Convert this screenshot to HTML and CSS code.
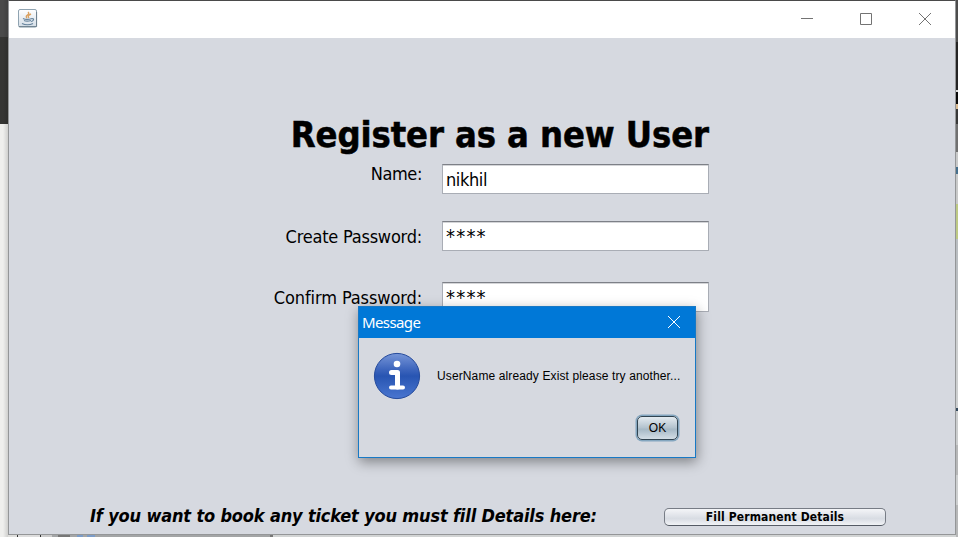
FILE: index.html
```
<!DOCTYPE html>
<html lang="en">
<head>
<meta charset="utf-8">
<title>Register</title>
<link rel="stylesheet" href="styles.css">
</head>
<body>
<div class="desktop">
  <div class="behind-left"></div>
  <main class="window">
    <header class="titlebar">
      <svg class="java" width="20" height="20" viewBox="0 0 20 20">
        <defs><linearGradient id="tile" x1="0" y1="0" x2="0" y2="1"><stop offset="0" stop-color="#fff"/><stop offset="1" stop-color="#d3dde6"/></linearGradient></defs>
        <rect x=".5" y=".5" width="18" height="17.500" rx="1.5" fill="url(#tile)" stroke="#8fa3b1"/>
        <path d="M1 17.600h17.600V3" fill="none" stroke="#6d7f8d"/>
        <path d="M9 9c-3-3 4-3 1-6M11 9c-2-2 0-3 2-4" fill="none" stroke="#dba160" stroke-width="1.4"/>
        <path d="M5 9.500c2 1 6 1 9 0M6 11.500c2 1 4 1 7 0M14 9.500c3 0 1 3-1 3M4 14.500c3 1.500 8 1.500 11 0" fill="none" stroke="#66839c" stroke-width="1.2"/>
      </svg>
      <div class="controls">
        <svg width="14" height="14" viewBox="0 0 14 14"><path d="M1 6.500h12"/></svg>
        <svg width="14" height="14" viewBox="0 0 14 14"><path d="M1.500 1.500h11v11h-11z"/></svg>
        <svg width="14" height="14" viewBox="0 0 14 14"><path d="M1 1l12 12M13 1L1 13"/></svg>
      </div>
    </header>
    <section class="content">
      <h1>Register as a new User</h1>
      <div class="form">
        <label class="l-name">Name:</label><div class="field name">nikhil</div>
        <label class="l-create">Create Password:</label><div class="field password">****</div>
        <label class="l-confirm">Confirm Password:</label><div class="field password">****</div>
      </div>
      <footer>
        <p>If you want to book any ticket you must fill Details here:</p>
        <button class="fill">Fill Permanent Details</button>
      </footer>
    </section>
  </main>
  <div class="behind-right">
    <i class="r1"></i><i class="r2"></i><i class="r3"></i><i class="r4"></i><i class="r5"></i><i class="r6"></i><i class="r7"></i><i class="r8"></i><i class="r9"></i><i class="r10"></i><i class="r11"></i><i class="r12"></i><i class="r13"></i><i class="r14"></i>
  </div>
  <div class="dialog">
    <div class="dialog-title"><span>Message</span>
      <svg width="14" height="14" viewBox="0 0 14 14"><path d="M1 1l12 12M13 1L1 13"/></svg>
    </div>
    <div class="dialog-body">
      <svg width="48" height="48" viewBox="0 0 48 48">
        <defs><linearGradient id="ball" x1="0" y1="0" x2="0" y2="1"><stop offset="0" stop-color="#7796d8"/><stop offset=".35" stop-color="#3e66bd"/><stop offset=".5" stop-color="#2855b2"/><stop offset="1" stop-color="#4a76d0"/></linearGradient></defs>
        <circle cx="24" cy="24" r="22.600" fill="url(#ball)" stroke="#264b9c"/>
        <circle cx="24" cy="12" r="3.300" fill="#fff"/>
        <path d="M18.500 20.500H24.500V35" fill="none" stroke="#fff" stroke-width="5" stroke-linecap="round" stroke-linejoin="round"/>
        <path d="M18 35.500h12" fill="none" stroke="#fff" stroke-width="4" stroke-linecap="round"/>
      </svg>
      <span class="msg">UserName already Exist please try another...</span>
    </div>
    <button class="ok">OK</button>
  </div>
</div>
</body>
</html>
```
FILE: styles.css
```
* { box-sizing: border-box; }
body { margin: 0; overflow: hidden; }
.desktop { position: relative; display: grid; grid-template-columns: 8px 948px 2px; width: 958px; height: 537px; background: linear-gradient(#4a4a4a 1px, transparent 1px), linear-gradient(90deg, #dededc 17px, #333 17px 18px, #ddd 18px 40px, #333 40px 41px, #ccc 41px 52px, #a3a5a6 52px 58px, #777 58px 70px, #a3a5a6 70px 77px, #7b9cc8 77px 83px, #a3a5a6 83px 87px, #7b9cc8 87px 95px, #a3a5a6 95px 270px, #777 270px 273px, #d2d4d4 273px); }
.behind-left { background: linear-gradient(90deg, transparent 3px, #0002), linear-gradient(#4a4a4a 37px, #353533 37px 124px, #efefed 124px); }
.window { display: flex; flex-direction: column; height: 535px; border: 1px solid #949698; border-top-color: #4a4a4a; background: #d6d9e0; font-family: "DejaVu Sans Condensed", "DejaVu Sans", sans-serif; font-stretch: condensed; color: #000; }
.titlebar { display: flex; justify-content: space-between; align-items: center; height: 37px; padding: 0 23px 0 9px; background: #fff; }
.java { margin-top: -1px; }
.controls { display: flex; gap: 45px; margin-top: -1px; }
.controls svg { fill: none; stroke: #737373; }
.content { display: flex; flex-direction: column; flex: 1; }
h1 { width: 700px; height: 44px; margin: 75px 0 0; font-size: 36px; line-height: 43px; letter-spacing: -.1px; text-align: right; white-space: nowrap; -webkit-text-stroke: .5px #000; }
.form { display: grid; grid-template-columns: 413px 267px; grid-template-rows: 57px 61px 30px; column-gap: 20px; padding-top: 7px; }
.form label { font-size: 18px; line-height: 20px; text-align: right; letter-spacing: -.4px; white-space: nowrap; }
.form .l-create { padding-top: 6px; letter-spacing: -.22px; }
.form .l-confirm { padding-top: 6px; letter-spacing: -.1px; }
.field { height: 30px; padding-left: 3px; border: 1px solid #a9adb5; border-top-color: #7d8087; background: #fff; box-shadow: inset 0 1px #d4d5d8; font-size: 18px; line-height: 30px; }
.name { letter-spacing: -.4px; }
.password { letter-spacing: 1.2px; font-size: 20px; line-height: 28px; }
footer { display: flex; justify-content: space-between; align-items: center; height: 32px; margin-top: auto; padding: 0 69px 0 81px; }
footer p { margin: 0 0 5px; font-size: 18px; font-style: italic; font-weight: bold; letter-spacing: -.16px; white-space: nowrap; }
button { padding: 0; color: #000; }
.fill { width: 222px; height: 18px; margin-bottom: 2px; border: 1px solid #777c85; border-bottom-color: #555b65; border-radius: 5px; background: linear-gradient(#f4f5f8, #d8dce3 60%, #f1f3f6); font: bold 12px/14px "DejaVu Sans Condensed", "DejaVu Sans", sans-serif; font-stretch: condensed; letter-spacing: .13px; }
.behind-right { display: flex; flex-direction: column; }
.behind-right i { flex: none; }
.r1 { height: 42px; background: #4d4d4d; }
.r2 { height: 48px; background: #252525; }
.r3 { height: 2px; background: #ddd; }
.r4 { height: 12px; background: #090909; }
.r5 { height: 5px; background: #d9ba91; }
.r6 { height: 15px; background: #383838; }
.r7 { height: 28px; background: #707070; }
.r8 { height: 52px; background: linear-gradient(#c8c9c9 15px, #456f8c 15px 22px, #c8c9c9 22px); }
.r9 { height: 35px; background: #bdc984; }
.r10 { height: 71px; background: #b9bdc1; }
.r11 { height: 98px; background: #cdcfd0; }
.r12 { height: 3px; background: #34495e; }
.r13 { height: 34px; background: #cbcdce; }
.r14 { height: 92px; background: linear-gradient(#b6b7b8 30px, #cdcfd0 30px 60px, #b6b7b8 60px); }
.dialog { position: absolute; left: 358px; top: 306px; display: flex; flex-direction: column; width: 338px; height: 152px; border: 1px solid #1879c5; background: #d6d9e0; box-shadow: 1px 4px 12px #0006; }
.dialog-title { display: flex; justify-content: space-between; align-items: center; height: 31px; padding: 0 14px 2px 3px; background: #0078d7; color: #fff; font: 15px "Noto Sans", sans-serif; letter-spacing: -.6px; }
.dialog-title svg { stroke: #fff; }
.dialog-body { display: flex; align-items: center; gap: 16px; height: 48px; margin: 14px 0 0 14px; }
.msg { font: 12px "Liberation Sans", sans-serif; letter-spacing: .12px; white-space: nowrap; }
.ok { align-self: flex-end; width: 41px; height: 24px; margin: 16px 17px 0 0; border: 1px solid #314451; border-radius: 5px; background: linear-gradient(#e4ebf0, #b2c2cd 50%, #a5b8c5 55%, #d3dee6); box-shadow: 0 0 0 1.500px #84a6bf; font: 12px "Liberation Sans", sans-serif; }
```
